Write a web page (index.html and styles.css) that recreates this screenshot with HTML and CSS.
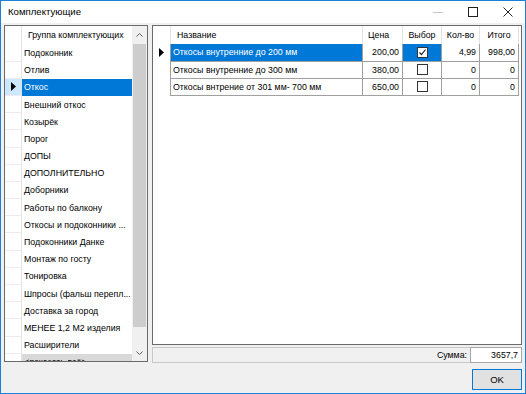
FILE: index.html
```html
<!DOCTYPE html>
<html lang="ru">
<head>
    <meta charset="UTF-8">
    <title>Комплектующие</title>
    <link rel="stylesheet" href="styles.css">
</head>
<body>
    <div class="window">
        <div class="titlebar">
            <span class="title">Комплектующие</span>
            <div class="controls">
                <span class="ctl"><svg width="10" height="10"><line x1="0" y1="5.5" x2="10" y2="5.5" stroke="#c4c4c4"/></svg></span>
                <span class="ctl"><svg width="10" height="10"><rect x="0.5" y="0.5" width="9" height="9" fill="none" stroke="#222"/></svg></span>
                <span class="ctl"><svg width="10" height="10"><path d="M0.5 0.5 L9.5 9.5 M9.5 0.5 L0.5 9.5" stroke="#222" fill="none"/></svg></span>
            </div>
        </div>

        <div class="content">
            <div class="groups">
                <div class="groups-body">
                    <div class="g-row g-head"><span class="rh"></span><span class="g-cell head-cell">Группа комплектующих</span></div>
                    <div class="g-row"><span class="rh"></span><span class="g-cell">Подоконник</span></div>
                    <div class="g-row"><span class="rh"></span><span class="g-cell">Отлив</span></div>
                    <div class="g-row current"><span class="rh"><svg width="5" height="9"><path d="M0 0 L5 4.5 L0 9 Z" fill="#000"/></svg></span><span class="g-cell">Откос</span></div>
                    <div class="g-row"><span class="rh"></span><span class="g-cell">Внешний откос</span></div>
                    <div class="g-row"><span class="rh"></span><span class="g-cell">Козырёк</span></div>
                    <div class="g-row"><span class="rh"></span><span class="g-cell">Порог</span></div>
                    <div class="g-row"><span class="rh"></span><span class="g-cell">ДОПЫ</span></div>
                    <div class="g-row"><span class="rh"></span><span class="g-cell">ДОПОЛНИТЕЛЬНО</span></div>
                    <div class="g-row"><span class="rh"></span><span class="g-cell">Доборники</span></div>
                    <div class="g-row"><span class="rh"></span><span class="g-cell">Работы по балкону</span></div>
                    <div class="g-row"><span class="rh"></span><span class="g-cell">Откосы и подоконники ...</span></div>
                    <div class="g-row"><span class="rh"></span><span class="g-cell">Подоконники Данке</span></div>
                    <div class="g-row"><span class="rh"></span><span class="g-cell">Монтаж по госту</span></div>
                    <div class="g-row"><span class="rh"></span><span class="g-cell">Тонировка</span></div>
                    <div class="g-row"><span class="rh"></span><span class="g-cell">Шпросы (фальш перепл...</span></div>
                    <div class="g-row"><span class="rh"></span><span class="g-cell">Доставка за город</span></div>
                    <div class="g-row"><span class="rh"></span><span class="g-cell">МЕНЕЕ 1,2 М2 изделия</span></div>
                    <div class="g-row"><span class="rh"></span><span class="g-cell">Расширители</span></div>
                    <div class="g-row all"><span class="rh"></span><span class="g-cell">&lt;показать всё&gt;</span></div>
                </div>
                <div class="vscroll">
                    <div class="arrow"><svg width="7" height="4"><path d="M0.5 3.5 L3.5 0.5 L6.5 3.5" stroke="#606060" fill="none"/></svg></div>
                    <div class="thumb"></div>
                    <div class="track"></div>
                    <div class="arrow"><svg width="7" height="4"><path d="M0.5 0.5 L3.5 3.5 L6.5 0.5" stroke="#606060" fill="none"/></svg></div>
                </div>
            </div>

            <div class="right">
                <div class="items">
                    <div class="i-row i-head">
                        <span class="rh"></span>
                        <span class="c name">Название</span>
                        <span class="c price-h">Цена</span>
                        <span class="c mid">Выбор</span>
                        <span class="c mid">Кол-во</span>
                        <span class="c mid">Итого</span>
                    </div>
                    <div class="i-row">
                        <span class="rh"><svg width="5" height="9"><path d="M0 0 L5 4.5 L0 9 Z" fill="#000"/></svg></span>
                        <span class="c name sel">Откосы внутренние до 200 мм</span>
                        <span class="c num">200,00</span>
                        <span class="c mid sel"><span class="check"><svg width="9" height="9"><path d="M1.5 4.5 L3.5 6.5 L7.5 1.5" stroke="#222" stroke-width="1.2" fill="none"/></svg></span></span>
                        <span class="c num">4,99</span>
                        <span class="c num">998,00</span>
                    </div>
                    <div class="i-row">
                        <span class="rh"></span>
                        <span class="c name">Откосы внутренние до 300 мм</span>
                        <span class="c num">380,00</span>
                        <span class="c mid"><span class="check"></span></span>
                        <span class="c num">0</span>
                        <span class="c num">0</span>
                    </div>
                    <div class="i-row">
                        <span class="rh"></span>
                        <span class="c name">Откосы внтрение от 301 мм- 700 мм</span>
                        <span class="c num">650,00</span>
                        <span class="c mid"><span class="check"></span></span>
                        <span class="c num">0</span>
                        <span class="c num">0</span>
                    </div>
                </div>
                <div class="sum">
                    <div class="sum-label">Сумма:</div>
                    <div class="sum-value">3657,7</div>
                </div>
                <div class="buttons">
                    <button class="ok">OK</button>
                </div>
            </div>
        </div>
    </div>
</body>
</html>
```

FILE: styles.css
```css
html, body {
    margin: 0;
    padding: 0;
}
body {
    font-family: 'Liberation Sans', Arial, sans-serif;
    font-size: 8.8px;
    color: #000;
    background: #fff;
}
.window {
    width: 526px;
    height: 394px;
    box-sizing: border-box;
    border: 1px solid #1a80d8;
    background-color: #f0f0f0;
    display: flex;
    flex-direction: column;
}
.titlebar {
    height: 22px;
    background-color: #fff;
    display: flex;
    align-items: center;
    justify-content: space-between;
}
.title {
    padding-left: 7px;
    font-size: 9.6px;
    padding-bottom: 1px;
}
.controls {
    display: flex;
}
.ctl {
    width: 35px;
    height: 22px;
    display: flex;
    align-items: center;
    justify-content: center;
}
.content {
    flex: 1;
    display: flex;
    gap: 4px;
    padding: 2px 3px 0 3px;
}

/* left grid */
.groups {
    width: 144px;
    height: 337px;
    box-sizing: border-box;
    border: 1px solid #6a6a6a;
    background-color: #fff;
    display: flex;
    overflow: hidden;
}
.groups-body {
    flex: 1;
    overflow: hidden;
}
.g-row {
    display: flex;
    height: 17.2px;
    align-items: stretch;
}
.g-row.g-head {
    height: 18.4px;
}
.rh {
    width: 17px;
    flex: none;
    border-right: 1px solid #e4e4e4;
    border-bottom: 1px solid #f0eaf0;
    box-sizing: border-box;
    display: flex;
    align-items: center;
    justify-content: center;
}
.g-head .rh {
    border-bottom: none;
}
.g-cell {
    flex: 1;
    padding-left: 2px;
    display: flex;
    align-items: center;
    white-space: nowrap;
    overflow: hidden;
}
.head-cell {
    padding-left: 6px;
}
.current .rh {
    background-color: #cce8ff;
}
.current .g-cell {
    background-color: #0078d7;
    color: #fff;
}
.all .g-cell {
    background-color: #d9d9d9;
}
.vscroll {
    width: 15px;
    flex: none;
    background-color: #f0f0f0;
    display: flex;
    flex-direction: column;
}
.arrow {
    height: 17px;
    display: flex;
    align-items: center;
    justify-content: center;
}
.thumb {
    height: 283px;
    margin: 1px 1px 0 1px;
    background-color: #cdcdcd;
}
.track {
    flex: 1;
}

/* right side */
.right {
    flex: 1;
    display: flex;
    flex-direction: column;
}
.items {
    height: 320px;
    box-sizing: border-box;
    border: 1px solid #6a6a6a;
    background-color: #fff;
}
.i-row {
    display: grid;
    grid-template-columns: 18px 192px 40px 39px 38px 39px;
    height: 17.2px;
}
.i-row.i-head {
    height: 18.4px;
}
.i-row .rh {
    width: auto;
    border-bottom: none;
    border-right: 1px solid #a0a0a0;
}
.i-head .rh {
    border-right: 1px solid #e4e4e4;
}
.c {
    display: flex;
    align-items: center;
    white-space: nowrap;
    overflow: hidden;
    box-sizing: border-box;
    border-right: 1px solid #a0a0a0;
    border-bottom: 1px solid #a0a0a0;
}
.i-head .c {
    border-right: 1px solid #e4e4e4;
    border-bottom: none;
}
.name {
    padding-left: 2px;
}
.i-head .name {
    padding-left: 6px;
}
.price-h {
    padding-left: 5px;
}
.mid {
    justify-content: center;
}
.num {
    justify-content: flex-end;
    padding-right: 3px;
}
.sel {
    background-color: #0078d7;
    color: #fff;
}
.check {
    width: 11px;
    height: 11px;
    box-sizing: border-box;
    border: 1px solid #333;
    background-color: #fff;
    display: flex;
    align-items: center;
    justify-content: center;
}
.sum {
    display: flex;
    height: 16px;
    margin-top: 2px;
}
.sum-label {
    flex: 1;
    box-sizing: border-box;
    border: 1px solid #c8c8c8;
    border-right: none;
    text-align: right;
    padding-right: 3px;
    line-height: 14px;
}
.sum-value {
    width: 52px;
    box-sizing: border-box;
    border: 1px solid #a8a8a8;
    background-color: #fff;
    text-align: right;
    padding-right: 3px;
    line-height: 14px;
}
.buttons {
    display: flex;
    justify-content: flex-end;
    margin-top: 6px;
}
.ok {
    width: 50px;
    height: 21px;
    border: 1px solid #0078d7;
    background-color: #e1e1e1;
    font-family: 'Liberation Sans', Arial, sans-serif;
    font-size: 9.5px;
    color: #000;
    padding: 0;
}
```
